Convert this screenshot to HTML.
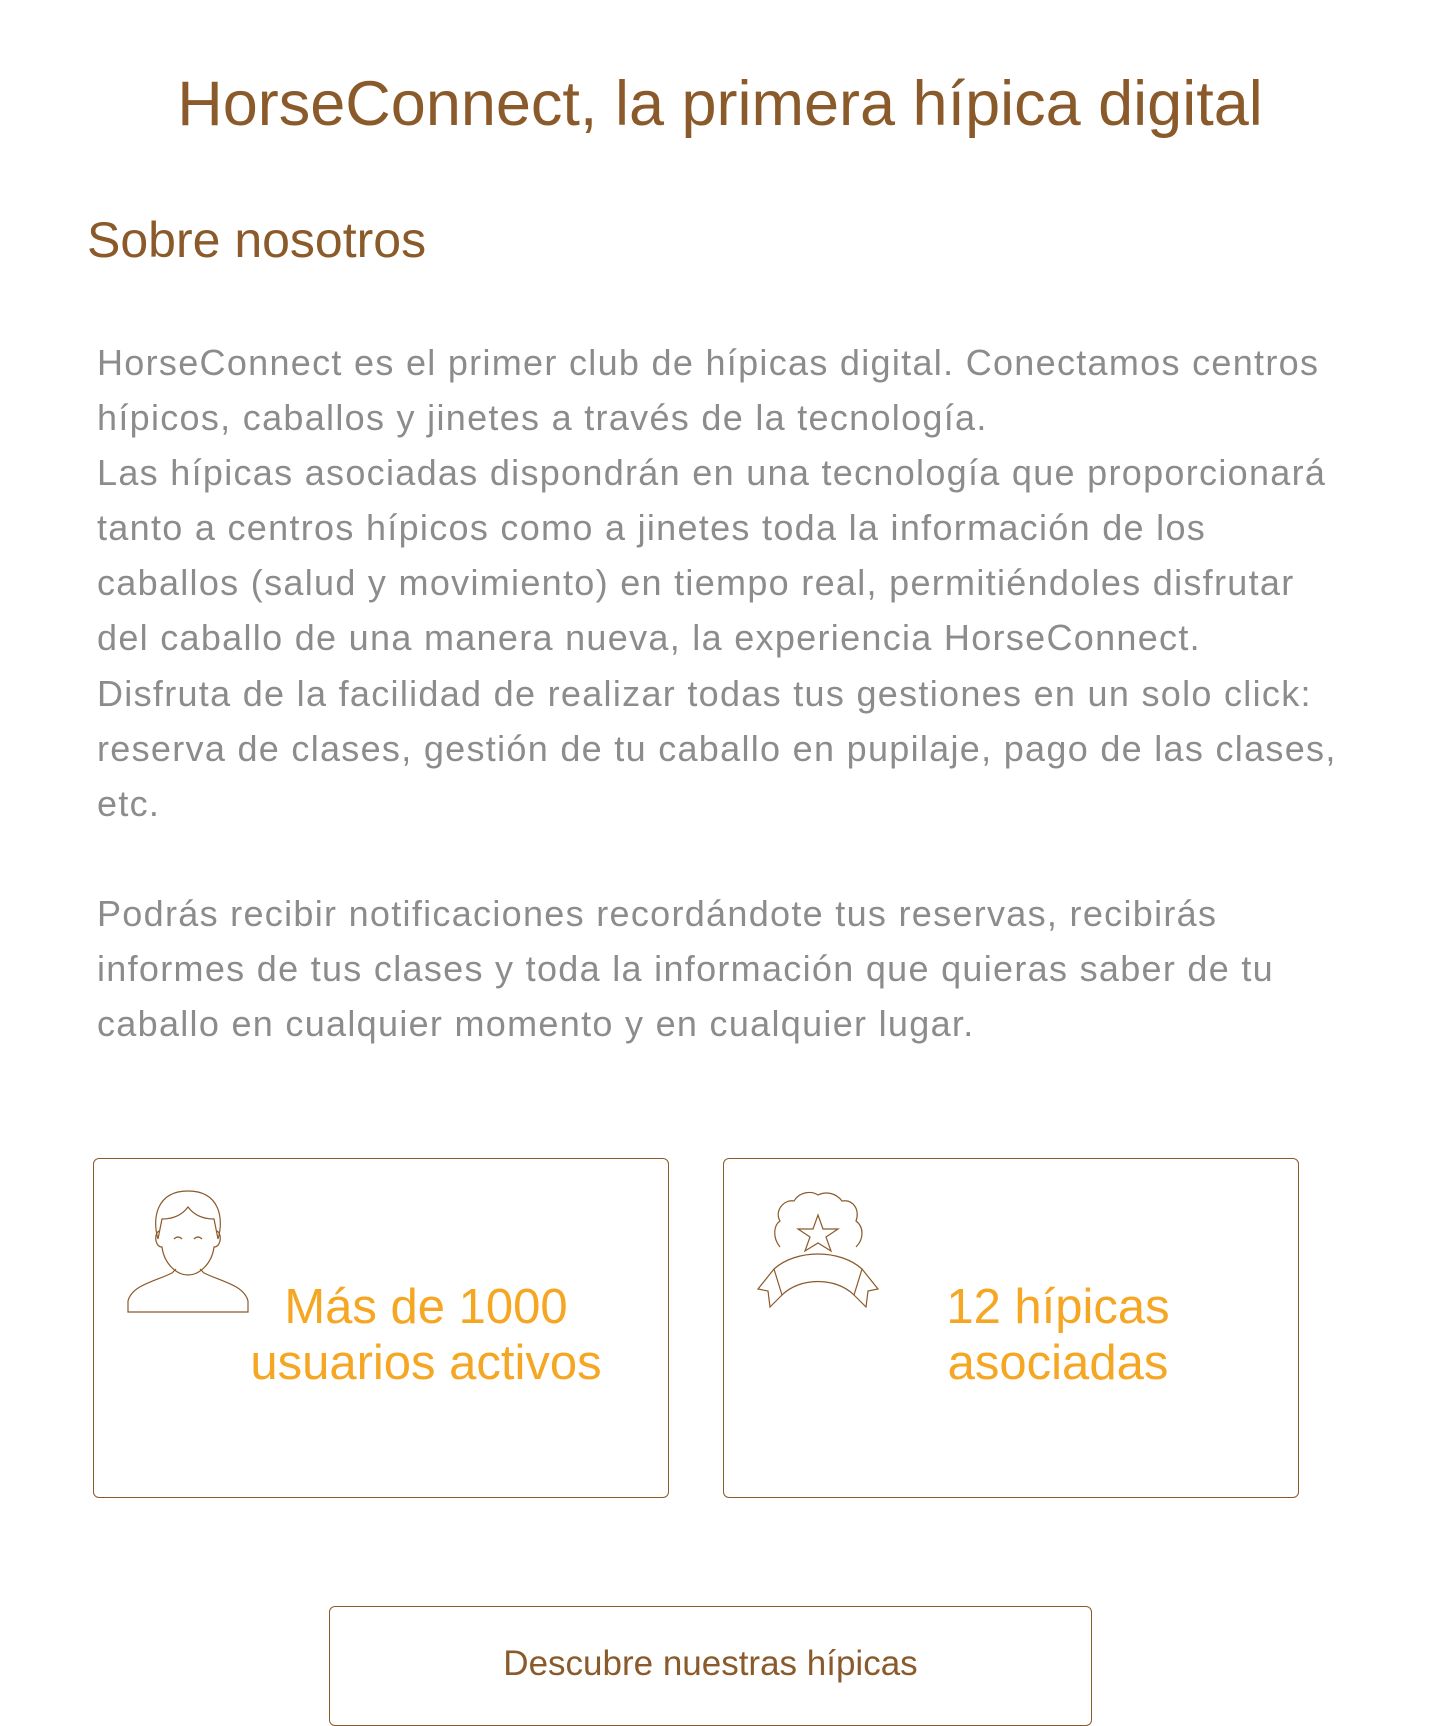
<!DOCTYPE html>
<html><head><meta charset="utf-8">
<style>
body{margin:0;background:#fff;width:1440px;height:1678px;overflow:hidden;font-family:"Liberation Sans",sans-serif;position:relative}
h1{position:absolute;top:66px;left:0;width:1440px;text-align:center;margin:0;font-weight:normal;font-size:63px;color:#8b5a2b;line-height:76px}
h2{position:absolute;top:212px;left:87px;margin:0;font-weight:normal;font-size:50px;color:#8b5a2b;line-height:56px}
.p{position:absolute;left:97px;top:335px;font-size:36px;letter-spacing:1.3px;line-height:55.1px;color:#8c8c8c;white-space:nowrap}
.box{position:absolute;top:1158px;width:576px;height:340px;border:1px solid #8b5a2b;border-radius:6px;box-sizing:border-box}
.stat{position:absolute;font-size:49px;line-height:56px;color:#f5a623;text-align:center;width:400px}
.btn{position:absolute;left:329px;top:1606px;width:763px;height:120px;border:1px solid #8b5a2b;border-radius:6px;box-sizing:border-box}
.btn span{position:absolute;left:0;width:100%;top:37px;text-align:center;font-size:35px;color:#8b5a2b}
</style></head><body>
<h1>HorseConnect, la primera hípica digital</h1>
<h2>Sobre nosotros</h2>
<div class="p">HorseConnect es el primer club de hípicas digital. Conectamos centros<br>hípicos, caballos y jinetes a través de la tecnología.<br>Las hípicas asociadas dispondrán en una tecnología que proporcionará<br>tanto a centros hípicos como a jinetes toda la información de los<br>caballos (salud y movimiento) en tiempo real, permitiéndoles disfrutar<br>del caballo de una manera nueva, la experiencia HorseConnect.<br>Disfruta de la facilidad de realizar todas tus gestiones en un solo click:<br>reserva de clases, gestión de tu caballo en pupilaje, pago de las clases,<br>etc.<br><br>Podrás recibir notificaciones recordándote tus reservas, recibirás<br>informes de tus clases y toda la información que quieras saber de tu<br>caballo en cualquier momento y en cualquier lugar.</div>

<div class="box" style="left:93px">
<svg style="position:absolute;left:32px;top:30px" width="124" height="124" viewBox="0 0 124 124" fill="none" stroke="#8b5a2b" stroke-width="1.2">
<path d="M32 50 C26 30 30 2 62 2 C94 2 98 30 92 50"/>
<path d="M32 50 L36 30 C48 30 56 26 62 18 C68 26 76 30 88 30 L92 50"/>
<path d="M34 42 C28 42 28 58 36 58 C38 74 50 86 62 86 C74 86 86 74 88 58 C96 58 96 42 90 42"/>
<path d="M48 50 q4 -4 8 0 M68 50 q4 -4 8 0"/>
<path d="M50 80 L46 84 C30 92 6 96 2 112 L2 123 L122 123 L122 112 C118 96 94 92 78 84 L74 80"/>
</svg>
<div class="stat" style="left:132px;top:120px">Más de 1000<br>usuarios activos</div>
</div>

<div class="box" style="left:723px">
<svg style="position:absolute;left:32px;top:30px" width="126" height="126" viewBox="0 0 126 126" fill="none" stroke="#8b5a2b" stroke-width="1.2">
<path d="M24 58 C16 48 18 36 24 32 C18 22 28 10 38 12 C44 2 56 2 62 6 C70 2 80 4 86 12 C98 10 104 22 100 32 C108 38 108 50 100 58"/>
<path d="M62 26 L67 40 L82 40 L70 48 L75 62 L62 54 L49 62 L54 48 L42 40 L57 40 Z"/>
<path d="M18 80 C40 60 84 60 106 80 L98 106 C80 88 44 88 26 106 Z"/>
<path d="M18 80 L2 100 L12 102 L14 118 L26 106 M106 80 L122 100 L112 102 L110 118 L98 106"/>
</svg>
<div class="stat" style="left:134px;top:120px">12 hípicas<br>asociadas</div>
</div>

<div class="btn"><span>Descubre nuestras hípicas</span></div>
</body></html>
